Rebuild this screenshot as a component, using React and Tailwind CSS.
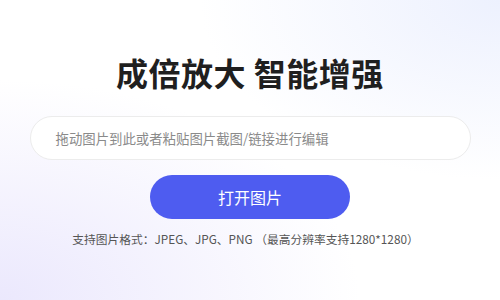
export default function App() {
  return (
    <div className="relative h-[300px] w-[500px] overflow-hidden bg-white font-['Noto_Sans_CJK_SC',sans-serif]">
      <div className="pointer-events-none absolute inset-0 bg-[radial-gradient(ellipse_360px_220px_at_0%_100%,#ebe8fd_0%,rgba(255,255,255,0)_100%)]" />
      <div className="pointer-events-none absolute inset-0 bg-[radial-gradient(ellipse_300px_180px_at_100%_0%,#edf1fe_0%,rgba(255,255,255,0)_100%)]" />
      <div className="relative flex flex-col items-center pt-[51px]">
        <h1 className="text-[32px] font-bold leading-[42px] tracking-[0.5px] text-[#1f1f1f]">成倍放大 智能增强</h1>
        <div className="mt-[23px] flex h-[44px] w-[441px] items-center rounded-full border border-[#ececec] bg-white pl-[25px] text-[13.4px] text-[#8a8a8a]">
          拖动图片到此或者粘贴图片截图/链接进行编辑
        </div>
        <button className="mt-[15px] flex h-[44px] w-[200px] items-center justify-center rounded-full bg-[#4e5cf0] text-[16px] text-white">
          打开图片
        </button>
        <p className="mt-[11px] pr-[9px] text-[11.75px] text-[#555]">支持图片格式：JPEG、JPG、PNG （最高分辨率支持1280*1280）</p>
      </div>
    </div>
  );
}
